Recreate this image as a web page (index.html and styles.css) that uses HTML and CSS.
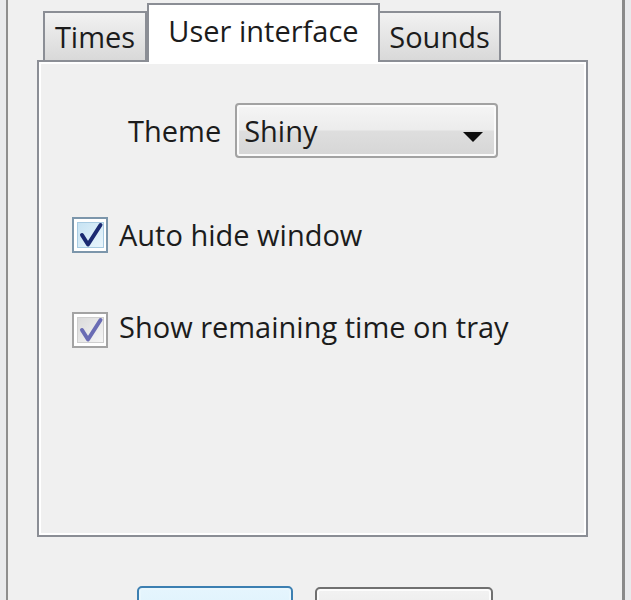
FILE: index.html
```html
<!DOCTYPE html>
<html lang="en">
<head>
<meta charset="utf-8">
<title>User interface</title>
<link rel="stylesheet" href="styles.css">
</head>
<body>
<div class="frame">
  <div class="tabs">
    <div class="tab tab-times">Times</div>
    <div class="tab tab-ui active">User interface</div>
    <div class="tab tab-sounds">Sounds</div>
  </div>
  <div class="panel">
    <div class="theme-row">
      <span class="label">Theme</span>
      <div class="combo">
        <span class="combo-text">Shiny</span>
        <span class="arrow"></span>
      </div>
    </div>
    <div class="check-row row-auto">
      <span class="box focus">
        <span class="box-inner">
          <svg viewBox="0 0 26 26" width="26" height="26"><path d="M5 13 L11 22.5 L23.5 3" fill="none" stroke="#1b2a72" stroke-width="4" stroke-linejoin="round" stroke-linecap="round"/></svg>
        </span>
      </span>
      <span class="check-label">Auto hide window</span>
    </div>
    <div class="check-row row-tray">
      <span class="box plain">
        <span class="box-inner">
          <svg viewBox="0 0 26 26" width="26" height="26"><path d="M5 13 L11 22.5 L23.5 3" fill="none" stroke="#6a6cb4" stroke-width="4" stroke-linejoin="round" stroke-linecap="round"/></svg>
        </span>
      </span>
      <span class="check-label">Show remaining time on tray</span>
    </div>
  </div>
  <div class="buttons">
    <button class="btn btn-ok">OK</button>
    <button class="btn btn-cancel">Cancel</button>
  </div>
</div>
</body>
</html>
```
FILE: styles.css
```css
html, body {
  margin: 0;
  padding: 0;
  height: 600px;
  overflow: hidden;
}
body {
  background: #e9eaec;
  font-family: "Open Sans", "Noto Sans", sans-serif;
  font-size: 29px;
  color: #1c1c1c;
}
.frame {
  box-sizing: border-box;
  margin-left: 6px;
  width: 619px;
  height: 600px;
  background: #f0f0f0;
  border-left: 2px solid #8e8e8e;
  border-right: 3px solid #8a8a8a;
  padding-top: 3px;
  overflow: hidden;
}
.tabs {
  display: flex;
  align-items: flex-end;
  margin-left: 35px;
  position: relative;
  z-index: 1;
}
.tab {
  box-sizing: border-box;
  text-align: center;
  line-height: 36px;
  border: 2px solid #8b8e95;
  border-bottom: none;
  white-space: nowrap;
}
.tab-times, .tab-sounds {
  height: 49px;
  padding-top: 6px;
  background: linear-gradient(#f2f2f2, #e4e4e4 55%, #d9d9d9);
}
.tab-times { width: 104px; }
.tab-sounds { width: 121px; border-left: none; }
.tab-ui {
  width: 233px;
  height: 59px;
  margin-bottom: -2px;
  padding-top: 8px;
  background: #ffffff;
}
.panel {
  box-sizing: border-box;
  margin-left: 29px;
  width: 551px;
  height: 477px;
  border: 2px solid #8b8e95;
  box-shadow: inset 0 0 0 2px #ffffff;
  background: #f0f0f0;
  padding: 41px 0 0 89px;
}
.theme-row {
  display: flex;
  align-items: center;
  gap: 14px;
  line-height: 36px;
}
.combo {
  box-sizing: border-box;
  width: 263px;
  height: 55px;
  display: flex;
  align-items: center;
  border: 2px solid #a2a2a2;
  border-radius: 4px;
  box-shadow: inset 0 0 0 2px #fbfbfb;
  background: linear-gradient(#f5f5f5, #ececec 48%, #dedede 52%, #d6d6d6);
  padding-left: 7px;
}
.arrow {
  margin-left: auto;
  margin-right: 13px;
  margin-top: 13px;
  width: 0;
  height: 0;
  border-left: 10px solid transparent;
  border-right: 10px solid transparent;
  border-top: 10px solid #0d0d0d;
}
.check-row {
  display: flex;
  align-items: center;
  gap: 11px;
  line-height: 36px;
  margin-left: -56px;
  margin-top: 59px;
}
.row-tray { margin-top: 59px; }
.row-tray .check-label { margin-top: -6px; }
.box {
  box-sizing: border-box;
  width: 36px;
  height: 36px;
  padding: 3px;
  background: #ffffff;
  display: flex;
}
.box.focus { border: 2px solid #7c96ab; }
.box.plain { border: 2px solid #a3a3a3; }
.box-inner {
  flex: 1;
  display: flex;
  box-sizing: border-box;
}
.box.focus .box-inner {
  border: 1px solid #a8cbe2;
  background: linear-gradient(135deg, #c7e3f3, #e9f5fc);
}
.box.plain .box-inner {
  border: 1px solid #cfcfcf;
  background: linear-gradient(135deg, #dadada, #f6f6f6);
}
.box-inner svg {
  margin: -1px 0 0 -1px;
  overflow: visible;
}
.buttons {
  display: flex;
  gap: 22px;
  margin-left: 129px;
  margin-top: 49px;
}
.btn {
  box-sizing: border-box;
  height: 60px;
  font: inherit;
  color: #1c1c1c;
  line-height: 36px;
  padding: 4px 0 0;
  border-radius: 5px;
  align-self: flex-start;
}
.btn-ok {
  width: 156px;
  border: 2px solid #3c7fb1;
  box-shadow: inset 0 0 0 2px #e9f7fd;
  background: linear-gradient(#e5f5fd, #d7effb);
}
.btn-cancel {
  width: 178px;
  margin-top: 1px;
  border: 2px solid #707070;
  box-shadow: inset 0 0 0 2px #fcfcfc;
  background: linear-gradient(#f2f2f2, #ebebeb 48%, #dddddd 52%, #cfcfcf);
}
```
